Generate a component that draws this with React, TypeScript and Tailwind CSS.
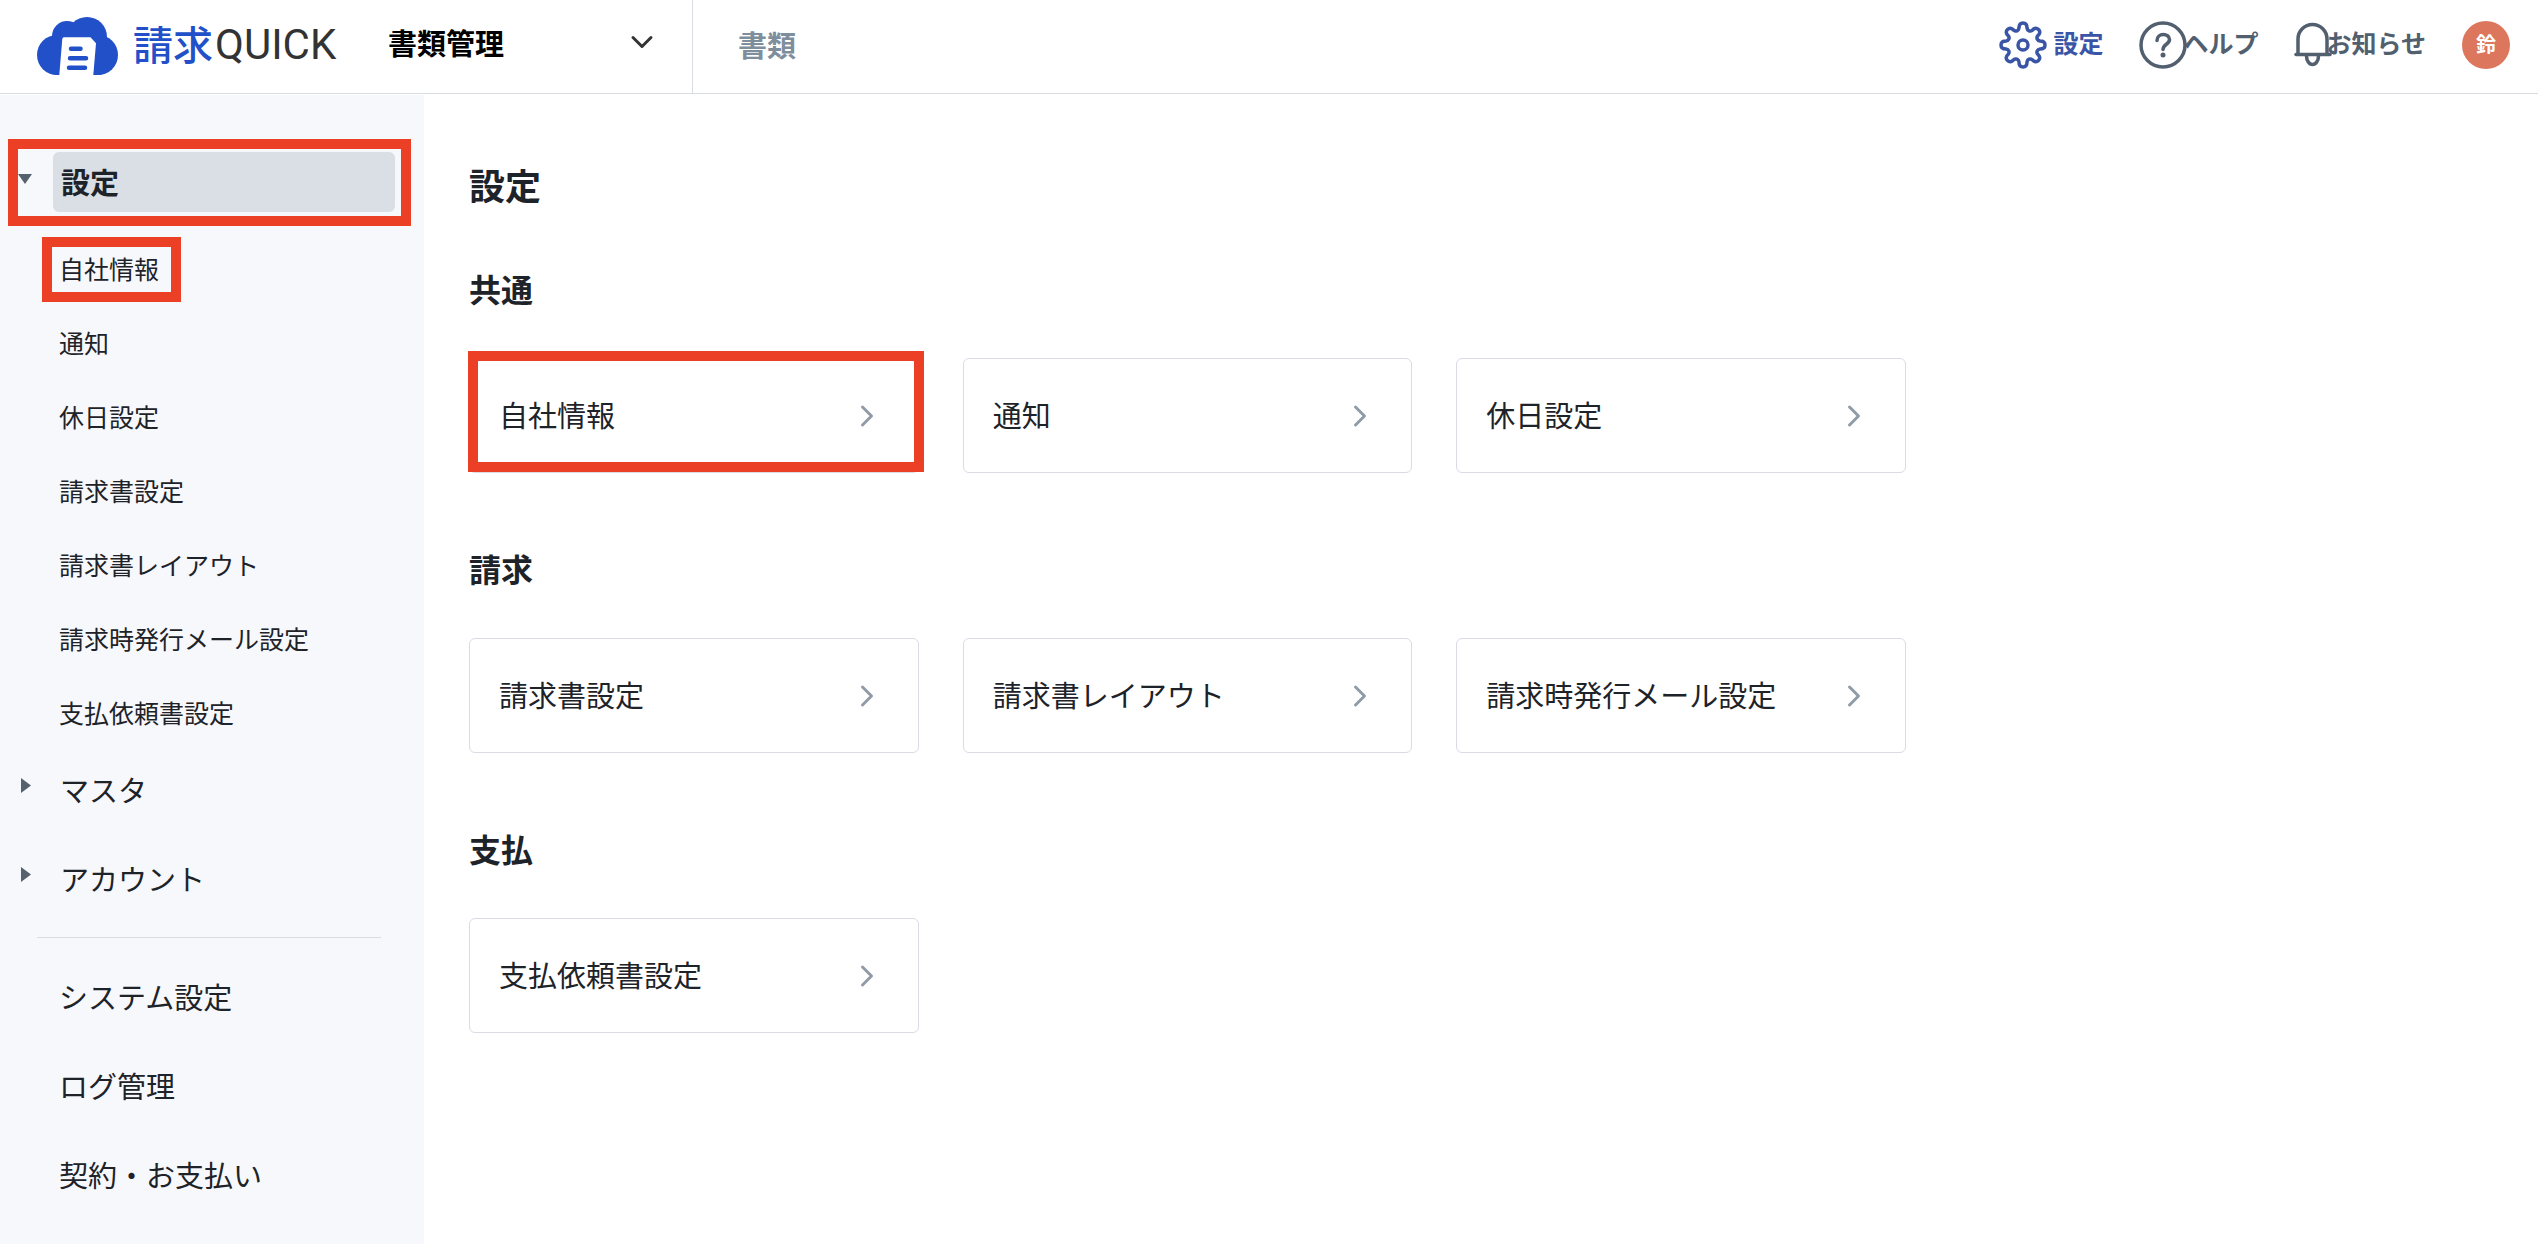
import { useState } from 'react';
import { ChevronDown, ChevronRight } from 'lucide-react';

interface MenuItem {
  label: string;
  href: string;
  marked?: boolean;
}

interface Section {
  title: string;
  items: MenuItem[];
}

const sections: Section[] = [
  {
    title: '共通',
    items: [
      { label: '自社情報', href: '#company', marked: true },
      { label: '通知', href: '#notification' },
      { label: '休日設定', href: '#holiday' },
    ],
  },
  {
    title: '請求',
    items: [
      { label: '請求書設定', href: '#invoice' },
      { label: '請求書レイアウト', href: '#layout' },
      { label: '請求時発行メール設定', href: '#mail' },
    ],
  },
  {
    title: '支払',
    items: [{ label: '支払依頼書設定', href: '#payment' }],
  },
];

const systemLinks: MenuItem[] = [
  { label: 'システム設定', href: '#system' },
  { label: 'ログ管理', href: '#log' },
  { label: '契約・お支払い', href: '#contract' },
];

function Logo() {
  return (
    <a href="#top" className="flex items-center" aria-label="請求QUICK">
      <svg width="82" height="58" viewBox="0 0 82 58" aria-hidden="true">
        <g fill="#2150c8">
          <circle cx="20" cy="38" r="20" />
          <circle cx="61" cy="38" r="20" />
          <circle cx="30" cy="19" r="15" />
          <circle cx="50" cy="20" r="20" />
          <rect x="18" y="20" width="46" height="38" />
        </g>
        <path d="M27 20.3h26.5l5.5 6L56.3 58h-34l3-36q.2-1.700 1.700-1.700z" fill="#fff" />
        <path d="M34 31.700h9.500M33 41.300h16M32 50.700h16" stroke="#2150c8" strokeWidth="4.500" strokeLinecap="round" />
      </svg>
      <span className="ml-3.5 pb-1.5 text-[40px] leading-none font-medium text-[#2150c8]">請求</span>
      <span className="ml-0.5 pb-0.5 font-[Roboto,'Liberation_Sans',sans-serif] text-[42px] leading-none text-[#333]">
        QUICK
      </span>
    </a>
  );
}

function GearIcon() {
  return (
    <svg width="48" height="48" viewBox="0 0 48 48" fill="none" stroke="currentColor" strokeWidth="3.500" strokeLinejoin="round" aria-hidden="true">
      <circle cx="24" cy="24" r="5" />
      <path d="M20 7Q20 2 24 2T28 7Q28.200 9 30 9.800T33.300 9.200Q36.600 5.700 39.500 8.500T38.800 14.700Q37.500 16.300 38.200 18T41 20Q46 20 46 24T41 28Q39 28.200 38.200 30T38.800 33.300Q42.300 36.600 39.500 39.500T33.300 38.800Q31.700 37.500 30 38.200T28 41Q28 46 24 46T20 41Q19.800 39 18 38.200T14.700 38.800Q11.400 42.300 8.500 39.500T9.200 33.300Q10.500 31.700 9.800 30T7 28Q2 28 2 24T7 20Q9 19.800 9.800 18T9.200 14.700Q5.700 11.400 8.500 8.500T14.700 9.200Q16.300 10.500 18 9.800T20 7Z" />
    </svg>
  );
}

function HelpIcon() {
  return (
    <svg width="48" height="48" viewBox="0 0 48 48" fill="none" stroke="currentColor" strokeWidth="3.500" aria-hidden="true">
      <circle cx="24" cy="24" r="22" />
      <path d="M18 19.500c0-8 12.500-7.500 12.500-1 0 5-6.500 4.500-6.500 10" strokeLinecap="round" />
      <circle cx="24" cy="34" r="2.500" fill="currentColor" stroke="none" />
    </svg>
  );
}

function BellIcon() {
  return (
    <svg width="38" height="48" viewBox="0 0 38 48" fill="none" stroke="currentColor" strokeWidth="3.500" aria-hidden="true">
      <path d="M4 33V18a14.500 14.500 0 0 1 29 0v15" />
      <path d="M2 33.500h34" strokeLinecap="round" />
      <path d="M12.500 35a6 8.500 0 0 0 12 0" />
    </svg>
  );
}

// Red frame drawn on top of the item it points at
function Marker({ className }: { className: string }) {
  return <span className={`pointer-events-none absolute border-10 border-[#eb4026] ${className}`} aria-hidden="true" />;
}

function Triangle({ open }: { open: boolean }) {
  return open ? (
    <svg width="14" height="10" viewBox="0 0 14 10" fill="#56616f" aria-hidden="true">
      <path d="M0 0h14L7 10z" />
    </svg>
  ) : (
    <svg width="10" height="15" viewBox="0 0 10 15" fill="#56616f" aria-hidden="true">
      <path d="M0 0v15l10-7.500z" />
    </svg>
  );
}

function Header() {
  return (
    <header className="flex h-[94px] items-stretch border-b border-[#d9dce1] bg-white pl-[37px]">
      <div className="flex w-[351px] items-center pb-0.5">
        <Logo />
      </div>
      <div className="relative flex w-[305px] items-center border-r border-[#d9dce1] pb-2.5">
        <select
          aria-label="サービス"
          className="w-full cursor-pointer appearance-none bg-transparent text-[29px] leading-10 font-bold text-black"
        >
          <option>書類管理</option>
        </select>
        <ChevronDown className="pointer-events-none absolute right-8 h-9 w-9 text-[#333]" strokeWidth={2} />
      </div>
      <nav className="flex items-center pb-1.5 pl-[45px]">
        <a href="#documents" className="text-[29px] leading-10 font-bold text-[#7f8e9d]">
          書類
        </a>
      </nav>
      <div className="ml-auto flex items-center gap-9 pr-7 pb-1 text-[25px] leading-10 font-bold text-[#525f6f]">
        <a href="#settings" className="flex items-center text-[#3b55a6]">
          <GearIcon />
          <span className="ml-1.5 pb-1.5">設定</span>
        </a>
        <a href="#help" className="flex items-center">
          <HelpIcon />
          <span className="-ml-1 pb-1.5">ヘルプ</span>
        </a>
        <button type="button" className="flex cursor-pointer items-center">
          <BellIcon />
          <span className="-ml-1.5 pb-1.5">お知らせ</span>
        </button>
        <button
          type="button"
          className="flex h-12 w-12 cursor-pointer items-center justify-center rounded-full bg-[#dc765c] pb-0.5 text-xl font-bold text-white"
        >
          鈴
        </button>
      </div>
    </header>
  );
}

function Sidebar() {
  const [open, setOpen] = useState(true);
  const subItems = sections.flatMap((section) => section.items);

  return (
    <aside className="mt-px w-[424px] shrink-0 bg-[#f7f8fc] pt-[57px] text-[29px] leading-10">
      <div className="relative flex h-[60px] items-center pr-[29px]">
        <button
          type="button"
          aria-label="設定を開閉"
          aria-expanded={open}
          onClick={() => setOpen(!open)}
          className="flex w-[53px] cursor-pointer pb-1.5 pl-[18px]"
        >
          <Triangle open={open} />
        </button>
        <a href="#settings" className="flex h-full flex-1 items-center rounded-md bg-[#dadee5] pb-0.5 pl-2 font-bold">
          設定
        </a>
        <Marker className="-top-[13px] right-[13px] -bottom-[14px] left-2" />
      </div>

      {open && (
        <ul className="mt-8 flex flex-col gap-[26px] pl-[59px] text-[25px]">
          {subItems.map((item) => (
            <li key={item.label} className="flex h-12 items-center">
              <a href={item.href} className="relative">
                {item.label}
                {item.marked && <Marker className="-top-[11px] -right-[22px] -bottom-[14px] -left-[17px]" />}
              </a>
            </li>
          ))}
        </ul>
      )}

      <ul className="mt-[23px] flex flex-col gap-[29px]">
        {['マスタ', 'アカウント'].map((label) => (
          <li key={label}>
            <button type="button" aria-expanded={false} className="flex h-[60px] w-full cursor-pointer items-center">
              <span className="w-[60px] pb-2 pl-[21px]">
                <Triangle open={false} />
              </span>
              {label}
            </button>
          </li>
        ))}
      </ul>

      <hr className="mt-[29px] mr-[43px] ml-[37px] border-[#d9dce1]" />

      <ul className="mt-7 flex flex-col gap-[29px] pb-10 pl-[59px]">
        {systemLinks.map((item) => (
          <li key={item.label} className="flex h-[60px] items-center">
            <a href={item.href}>{item.label}</a>
          </li>
        ))}
      </ul>
    </aside>
  );
}

export default function App() {
  return (
    <div className="flex min-h-screen flex-col bg-white font-['Noto_Sans_CJK_JP',sans-serif] text-[#1d2328]">
      <Header />
      <div className="flex flex-1">
        <Sidebar />
        <main className="flex-1 px-[45px] pt-[66px]">
          <h1 className="text-4xl leading-12 font-bold">設定</h1>
          <div className="mt-14 flex flex-col gap-[71px]">
            {sections.map((section) => (
              <section key={section.title}>
                <h2 className="text-[32px] leading-12 font-bold">{section.title}</h2>
                <div className="mt-[46px] grid max-w-[1437px] grid-cols-3 gap-11">
                  {section.items.map((item) => (
                    <a
                      key={item.label}
                      href={item.href}
                      className="relative flex h-[115px] items-center justify-between rounded-md border border-[#d9dce5] pr-[33px] pl-[29px] text-[29px] leading-10"
                    >
                      <span className="pb-1">{item.label}</span>
                      <ChevronRight className="h-9 w-9 text-[#919ba7]" strokeWidth={2} />
                      {item.marked && <Marker className="-top-2 -right-1.5 bottom-0 -left-0.5" />}
                    </a>
                  ))}
                </div>
              </section>
            ))}
          </div>
        </main>
      </div>
    </div>
  );
}
